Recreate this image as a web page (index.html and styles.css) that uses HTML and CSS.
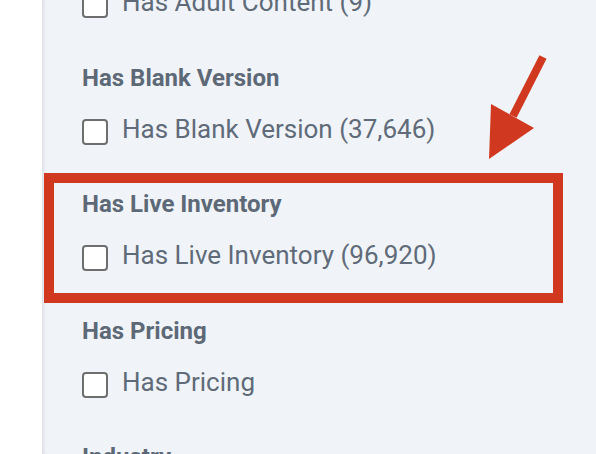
FILE: index.html
```html
<!DOCTYPE html>
<html lang="en">
  <head>
    <meta charset="UTF-8" />
    <meta name="viewport" content="width=device-width, initial-scale=1.0" />
    <title>Filters</title>
    <link rel="stylesheet" href="styles.css">
  </head>
  <body>
    <div class="gutter"></div>

    <main class="panel">
      <div class="facets">
        <section class="facet">
          <h3 class="facet-title">Has Adult Content</h3>
          <label class="option">
            <input type="checkbox" />
            <span>Has Adult Content (9)</span>
          </label>
        </section>

        <section class="facet">
          <h3 class="facet-title">Has Blank Version</h3>
          <label class="option">
            <input type="checkbox" />
            <span>Has Blank Version (37,646)</span>
          </label>
        </section>

        <section class="facet">
          <h3 class="facet-title">Has Live Inventory</h3>
          <label class="option">
            <input type="checkbox" />
            <span>Has Live Inventory (96,920)</span>
          </label>
        </section>

        <section class="facet">
          <h3 class="facet-title">Has Pricing</h3>
          <label class="option">
            <input type="checkbox" />
            <span>Has Pricing</span>
          </label>
        </section>

        <section class="facet">
          <h3 class="facet-title">Industry</h3>
        </section>
      </div>
    </main>

    <!-- annotation overlay -->
    <div class="highlight"></div>
    <svg class="arrow" viewBox="0 0 596 454" width="596" height="454">
      <line x1="543" y1="57" x2="513" y2="116" stroke="#d0391f" stroke-width="8" />
      <polygon points="491,104 534,128 489,159" fill="#d0391f" />
    </svg>
  </body>
</html>
```

FILE: styles.css
```css
body {
  margin: 0;
  height: 454px;
  overflow: hidden;
  display: flex;
  background: #fff;
  font-family: Roboto, "Liberation Sans", sans-serif;
  color: #5f6b79;
}

.gutter {
  width: 42px;
  flex: none;
}

.panel {
  flex: 1;
  background: #f0f4f8;
  box-shadow: inset 4px 0 4px -3px rgba(0, 0, 0, 0.12);
  padding-left: 40px;
  overflow: hidden;
}

.facets {
  margin-top: -63px;
}

.facet {
  height: 126.5px;
}

.facet-title {
  margin: 0 0 22px;
  font-size: 24px;
  line-height: 28px;
  font-weight: 700;
  color: #5d6977;
}

.option {
  display: flex;
  align-items: flex-start;
  gap: 14px;
  font-size: 26px;
  line-height: 30px;
}

.option input {
  appearance: none;
  -webkit-appearance: none;
  flex: none;
  width: 26px;
  height: 26px;
  margin: 5px 0 0;
  border: 2px solid #6e6e6e;
  border-radius: 4px;
  background: #fff;
}

.highlight {
  position: absolute;
  left: 44px;
  top: 173px;
  width: 499px;
  height: 110px;
  border: 10px solid #d0391f;
}

.arrow {
  position: absolute;
  left: 0;
  top: 0;
  pointer-events: none;
}
```
